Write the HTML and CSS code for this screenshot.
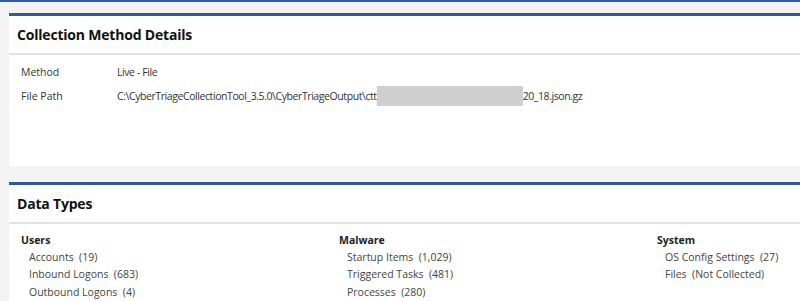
FILE: index.html
```html
<!DOCTYPE html>
<html lang="en">
<head>
<meta charset="UTF-8">
<title>Collection Method Details</title>
<link rel="stylesheet" href="styles.css">
</head>
<body>

<div class="topbar"></div>

<div class="page">

  <!-- Collection method -->
  <div class="card card-method">
    <h2 class="card-title">Collection Method Details</h2>
    <div class="card-body">
      <div class="row">
        <div class="label">Method</div>
        <div class="value">Live - File</div>
      </div>
      <div class="row">
        <div class="label">File Path</div>
        <div class="value">C:\CyberTriageCollectionTool_3.5.0\CyberTriageOutput\ctt<span class="redact"></span>20_18.json.gz</div>
      </div>
    </div>
  </div>

  <!-- Data types -->
  <div class="card card-types">
    <h2 class="card-title">Data Types</h2>
    <div class="types">
      <div class="type-col">
        <div class="type-head">Users</div>
        <div class="type-item">Accounts&nbsp; (19)</div>
        <div class="type-item">Inbound Logons&nbsp; (683)</div>
        <div class="type-item">Outbound Logons&nbsp; (4)</div>
      </div>
      <div class="type-col">
        <div class="type-head">Malware</div>
        <div class="type-item">Startup Items&nbsp; (1,029)</div>
        <div class="type-item">Triggered Tasks&nbsp; (481)</div>
        <div class="type-item">Processes&nbsp; (280)</div>
      </div>
      <div class="type-col">
        <div class="type-head">System</div>
        <div class="type-item">OS Config Settings&nbsp; (27)</div>
        <div class="type-item">Files&nbsp; (Not Collected)</div>
      </div>
    </div>
  </div>

</div>

</body>
</html>
```

FILE: styles.css
```css
/* base */
* {
  margin: 0;
  padding: 0;
  box-sizing: border-box;
}

body {
  font-family: 'Open Sans', 'Noto Sans', sans-serif;
  background: #f3f3f3;
  color: #333;
  overflow: hidden;
}

.topbar {
  height: 2px;
  background: #2f5ea8;
}

.page {
  padding: 11px 0 0 9px;
}

/* cards */
.card {
  background: #fff;
  border-top: 3px solid #2d5a9b;
  margin-right: -20px;
}

.card-method {
  height: 153px;
  margin-bottom: 16px;
}

.card-title {
  font-size: 14px;
  font-weight: 700;
  letter-spacing: -0.2px;
  color: #111;
  height: 39px;
  line-height: 37px;
  padding-left: 8px;
  border-bottom: 2px solid #e2e2e2;
}

.card-body {
  padding: 5px 0 0 12px;
}

.row {
  display: flex;
  height: 24px;
  align-items: center;
  font-size: 10.5px;
  color: #333;
}

.label {
  width: 96px;
}

.value {
  display: flex;
  align-items: center;
  letter-spacing: -0.42px;
}

.redact {
  display: inline-block;
  width: 146px;
  height: 20px;
  background: #cfcfcf;
}

/* data types */
.types {
  display: grid;
  grid-template-columns: 318px 318px 1fr;
  padding: 9px 0 0 12px;
}

.type-head {
  font-size: 10.5px;
  font-weight: 700;
  color: #222;
  height: 16px;
}

.type-item {
  font-size: 10.5px;
  color: #444;
  height: 17.4px;
  line-height: 17.4px;
  padding-left: 8px;
}
```
